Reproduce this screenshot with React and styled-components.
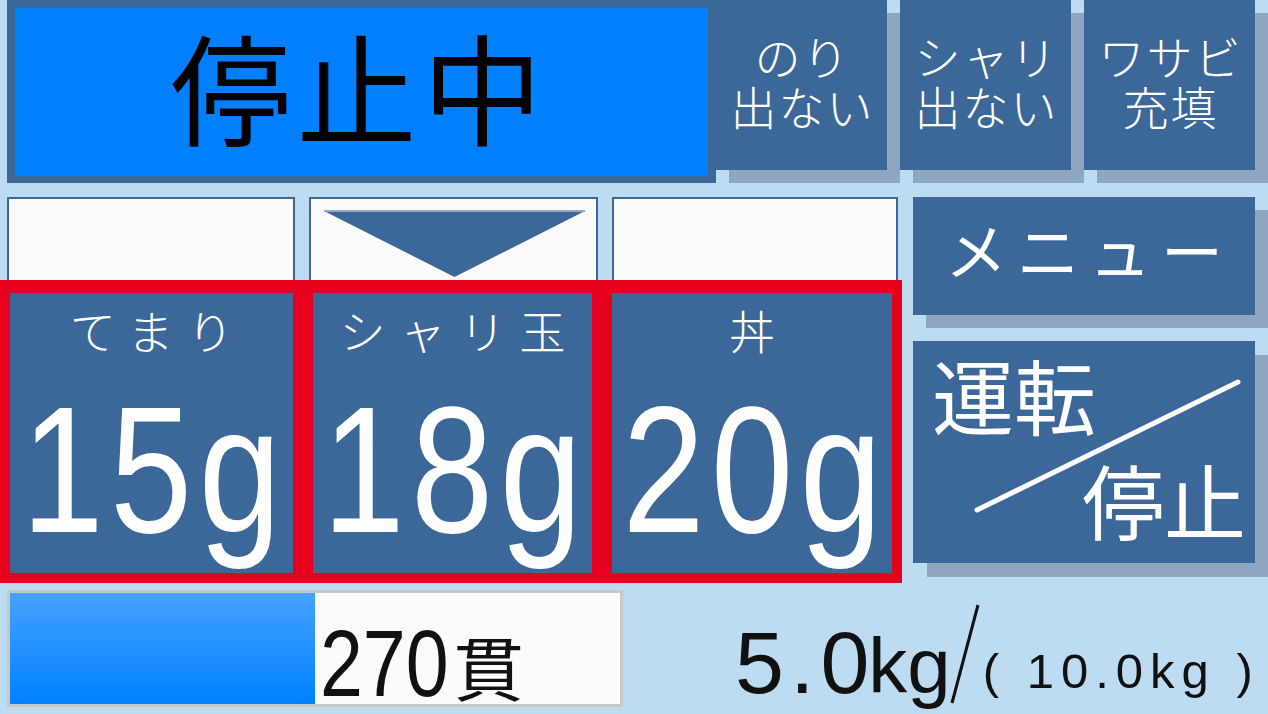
import React from 'react'
import styled, { createGlobalStyle } from 'styled-components'

const GlobalStyle = createGlobalStyle`
  * { box-sizing: border-box; }
  html, body { margin: 0; padding: 0; background: #bddcf1; }
  body { font-family: "Noto Sans CJK JP", "Liberation Sans", sans-serif; }
`

const JP = `"Noto Sans CJK JP", "Liberation Sans", sans-serif`
const NUM = `"Liberation Sans", Arial, "Noto Sans CJK JP", sans-serif`

const Screen = styled.div`
  width: 1268px;
  height: 714px;
  background: #bddcf1;
  display: flex;
  flex-direction: column;
  overflow: hidden;
`

const TopRow = styled.div`
  display: flex;
  height: 183px;
  padding-left: 7px;
`

const StatusPanel = styled.div`
  width: 709px;
  height: 183px;
  background: #3b6899;
  padding: 8px 8px 7px;
`

const StatusFace = styled.div`
  height: 100%;
  background: #0080ff;
  display: flex;
  align-items: center;
  justify-content: center;
  padding: 0 4px 14px 0;
  font-family: ${JP};
  font-size: 120px;
  line-height: 1.3;
  letter-spacing: 6px;
  color: #000;
`

const Key = styled.button`
  width: ${p => p.$w}px;
  height: ${p => p.$h}px;
  margin: 0 13px 0 0;
  padding: 0;
  border: none;
  background: #3b6899;
  box-shadow: ${p => p.$shadow || 13}px ${p => p.$shadow || 13}px 0 #8fa6c1;
  color: #fff;
  font-family: ${JP};
  display: flex;
  flex-direction: column;
  align-items: center;
  justify-content: center;
  flex-shrink: 0;
  cursor: pointer;
`

const KeyText = styled.span`
  display: flex;
  flex-direction: column;
  align-items: center;
  gap: 2px;
  padding-bottom: 10px;
`

const KeyLine = styled.span`
  display: block;
  font-size: 46px;
  line-height: 48px;
  font-weight: 300;
  letter-spacing: 2px;
  padding-left: 2px;
  white-space: nowrap;
`

const Middle = styled.div`
  display: flex;
  margin-top: 14px;
`

const LeftCol = styled.div`
  width: 902px;
  display: flex;
  flex-direction: column;
`

const Slots = styled.div`
  display: grid;
  grid-template-columns: 288px 289px 286px;
  column-gap: 14px;
  padding-left: 7px;
  height: 85px;
`

const Slot = styled.div`
  background: #fbfbfb;
  border: 2px solid #3b6899;
  border-bottom: none;
  overflow: hidden;
`

const Cards = styled.div`
  display: grid;
  grid-template-columns: 303px 299px 300px;
  height: 303px;
  margin-top: -2px;
`

const Card = styled.div`
  border: solid #e6001e;
  border-width: 13px 10px 10px;
  background: #3b6899;
  color: #fff;
  display: flex;
  flex-direction: column;
  align-items: center;
  overflow: hidden;
`

const CardLabel = styled.div`
  margin-top: 13px;
  height: 46px;
  font-family: ${JP};
  font-size: 46px;
  line-height: 46px;
  font-weight: 300;
  letter-spacing: 14px;
  padding-left: 14px;
  white-space: nowrap;
`

const Grams = styled.div`
  margin-top: 28px;
  font-family: ${NUM};
  font-size: 180px;
  line-height: 180px;
  letter-spacing: 8px;
  padding-left: 8px;
  white-space: nowrap;
  transform: scaleX(0.82);
`

const RightCol = styled.div`
  margin-left: 11px;
  display: flex;
  flex-direction: column;
`

const MenuLabel = styled.span`
  font-size: 62px;
  line-height: 62px;
  letter-spacing: 10px;
  padding: 0 0 14px 10px;
  white-space: nowrap;
`

const RunKey = styled(Key)`
  position: relative;
  margin-top: 26px;
  padding: 12px 9px 0 19px;
  align-items: stretch;
  justify-content: flex-start;
`

const RunWord = styled.span`
  align-self: ${p => (p.$end ? 'flex-end' : 'flex-start')};
  margin-top: ${p => (p.$end ? 23 : 0)}px;
  font-size: 82px;
  line-height: 82px;
  white-space: nowrap;
`

const Diagonal = styled.svg`
  position: absolute;
  left: 0;
  top: 0;
  pointer-events: none;
`

const BottomRow = styled.div`
  display: flex;
  margin-top: 7px;
  padding-left: 7px;
  height: 117px;
`

const Gauge = styled.div`
  width: 616px;
  height: 117px;
  border: 3px solid #c8c8c8;
  background: #fbfbfb;
  display: flex;
  overflow: hidden;
  flex-shrink: 0;
`

const GaugeFill = styled.div`
  height: 100%;
  background: linear-gradient(#46a2ff, #0080ff);
`

const GaugeText = styled.div`
  padding: 31px 0 0 5px;
  font-family: ${NUM};
  font-size: 94px;
  line-height: 80px;
  color: #111;
  white-space: nowrap;
`

const Count = styled.span`
  display: inline-block;
  transform: scaleX(0.82);
  transform-origin: left;
  margin-right: -28px;
`

const Kan = styled.span`
  font-family: ${JP};
  font-size: 70px;
  margin-left: 5px;
`

const Readout = styled.div`
  padding: 13px 0 0 112px;
  line-height: 0;
  font-family: ${NUM};
  color: #111;
  white-space: nowrap;
`

const Big = styled.span`
  font-size: 88px;
  letter-spacing: 6px;
`

const Unit = styled.span`
  font-size: 78px;
  margin-left: -7px;
`

const SlashMark = styled.svg`
  width: 32px;
  height: 102px;
  vertical-align: -12px;
  margin: 0 2px 0 -2px;
`

const Cap = styled.span`
  font-size: 49px;
  letter-spacing: 7px;
  vertical-align: 5px;
`

const faults = [
  ['のり', '出ない'],
  ['シャリ', '出ない'],
  ['ワサビ', '充填'],
]

const presets = [
  { label: 'てまり', grams: 15 },
  { label: 'シャリ玉', grams: 18 },
  { label: '丼', grams: 20 },
]

const current = 5.0
const capacity = 10.0
const count = 270
const selected = 1

export default function App() {
  return (
    <>
      <GlobalStyle />
      <Screen>
        <TopRow>
          <StatusPanel>
            <StatusFace>停止中</StatusFace>
          </StatusPanel>
          {faults.map(lines => (
            <Key key={lines.join('')} $w={171} $h={170}>
              <KeyText>
                {lines.map(l => (
                  <KeyLine key={l}>{l}</KeyLine>
                ))}
              </KeyText>
            </Key>
          ))}
        </TopRow>

        <Middle>
          <LeftCol>
            <Slots>
              {presets.map((p, i) => (
                <Slot key={p.label}>
                  {i === selected && (
                    <svg width="285" height="83" viewBox="0 0 285 83">
                      <polygon points="13,12 274,12 143.5,78" fill="#3b6899" />
                      <rect x="13" y="11" width="261" height="2" fill="#93aac6" />
                    </svg>
                  )}
                </Slot>
              ))}
            </Slots>
            <Cards>
              {presets.map(p => (
                <Card key={p.label}>
                  <CardLabel>{p.label}</CardLabel>
                  <Grams>{p.grams}g</Grams>
                </Card>
              ))}
            </Cards>
          </LeftCol>

          <RightCol>
            <Key $w={342} $h={118}>
              <MenuLabel>メニュー</MenuLabel>
            </Key>
            <RunKey $w={342} $h={222} $shadow={14}>
              <RunWord>運転</RunWord>
              <RunWord $end>停止</RunWord>
              <Diagonal width="342" height="222" viewBox="0 0 342 222">
                <line x1="64" y1="169" x2="325" y2="41" stroke="#fff" strokeWidth="5" strokeLinecap="round" />
              </Diagonal>
            </RunKey>
          </RightCol>
        </Middle>

        <BottomRow>
          <Gauge>
            <GaugeFill style={{ width: `${(current / capacity) * 100}%` }} />
            <GaugeText>
              <Count>{count}</Count>
              <Kan>貫</Kan>
            </GaugeText>
          </Gauge>
          <Readout>
            <Big>{current.toFixed(1)}</Big>
            <Unit>kg</Unit>
            <SlashMark viewBox="0 0 32 102">
              <line x1="3" y1="100" x2="29" y2="2" stroke="#111" strokeWidth="3" />
            </SlashMark>
            <Cap>( {capacity.toFixed(1)}kg )</Cap>
          </Readout>
        </BottomRow>
      </Screen>
    </>
  )
}
